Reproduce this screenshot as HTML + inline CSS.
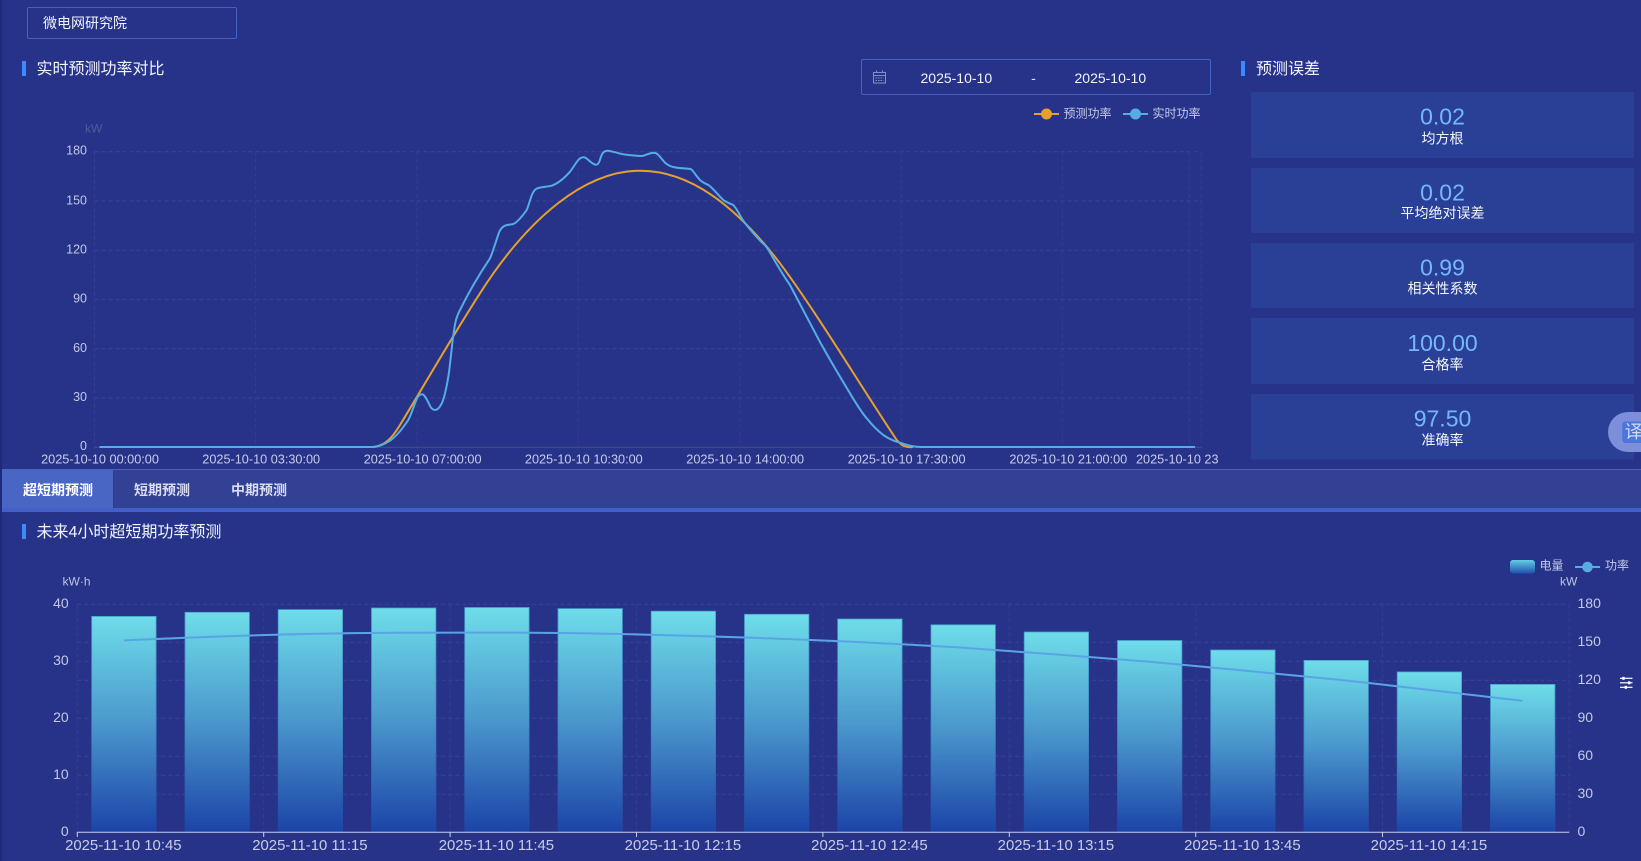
<!DOCTYPE html>
<html lang="zh-CN">
<head>
<meta charset="utf-8">
<title>实时预测功率对比</title>
<style>
html,body{margin:0;padding:0;width:1641px;height:861px;overflow:hidden;background:#273389;}
svg{display:block;position:absolute;left:0;top:0;}
text{font-family:"Liberation Sans","Noto Sans CJK SC",sans-serif;dominant-baseline:central;}
.t{font-size:16px;fill:#f2f4ff;}
.yl{font-size:12.5px;fill:#c3c7e6;text-anchor:end;}
.xl{font-size:12.7px;fill:#c9cce8;text-anchor:middle;}
.val{font-size:23px;fill:#74b7ff;text-anchor:middle;}
.lab{font-size:14px;fill:#f4f6ff;text-anchor:middle;}
.leg{font-size:12px;fill:#c6cae8;}
.l2{font-size:14px;fill:#c5c9e8;text-anchor:end;}
.r2{font-size:14px;fill:#c5c9e8;}
.x2{font-size:14.9px;fill:#c9cce8;text-anchor:middle;}
.tab{font-size:14px;font-weight:bold;fill:#d9dcf2;text-anchor:middle;}
.h{stroke:#3a4495;stroke-width:1;stroke-dasharray:4 3;fill:none;}
.v{stroke:#333e8f;stroke-width:1;stroke-dasharray:4 3;fill:none;}
</style>
</head>
<body>
<svg width="1641" height="861" viewBox="0 0 1641 861" xmlns="http://www.w3.org/2000/svg">
<defs>
<linearGradient id="g" x1="0" y1="0" x2="0" y2="1">
<stop offset="0" stop-color="#6edde9"/>
<stop offset="0.5" stop-color="#4a97cc"/>
<stop offset="1" stop-color="#1b44a8"/>
</linearGradient>
<linearGradient id="gs" x1="0" y1="0" x2="0" y2="1">
<stop offset="0" stop-color="#4a9fce"/>
<stop offset="0.5" stop-color="#3f86c4"/>
<stop offset="1" stop-color="#21459f"/>
</linearGradient>
<linearGradient id="gl" x1="0" y1="0" x2="0" y2="1">
<stop offset="0" stop-color="#62cfe4"/>
<stop offset="1" stop-color="#1f4fae"/>
</linearGradient>
</defs>

<rect x="0" y="0" width="1641" height="861" fill="#273389"/>
<rect x="0" y="0" width="2" height="861" fill="#1f2a78"/>

<!-- top box -->
<rect x="27.5" y="7.5" width="209" height="31" rx="1.5" fill="none" stroke="#4462c4"/>
<text x="43" y="23" style="font-size:14px;fill:#f2f4ff;">微电网研究院</text>

<!-- title 1 -->
<rect x="22" y="61" width="4" height="15" fill="#3b8bff"/>
<text class="t" x="36.5" y="69.5">实时预测功率对比</text>

<!-- date box -->
<rect x="861.5" y="59.5" width="349" height="35" rx="1.5" fill="none" stroke="#4462c4"/>
<g fill="none" stroke="#8090c6" stroke-width="1">
<rect x="873.5" y="72.5" width="12" height="10.5"/>
<path d="M873.5 75.5H885.5M876.5 70.5V73M882.5 70.5V73"/>
<path d="M875.5 78H883.5M875.5 80.5H883.5" stroke-dasharray="1.5 1"/>
</g>
<text x="920.5" y="78" style="font-size:14px;fill:#f2f4ff;">2025-10-10</text>
<text x="1033.5" y="78" style="font-size:14px;fill:#e0e3f5;text-anchor:middle;">-</text>
<text x="1074.5" y="78" style="font-size:14px;fill:#f2f4ff;">2025-10-10</text>

<!-- legend 1 -->
<line x1="1034" y1="114" x2="1059" y2="114" stroke="#e6a12c" stroke-width="2"/>
<circle cx="1046.5" cy="114" r="5.5" fill="#e6a12c"/>
<text class="leg" x="1063.5" y="113.5">预测功率</text>
<line x1="1123" y1="114" x2="1148" y2="114" stroke="#56ade3" stroke-width="2"/>
<circle cx="1135.5" cy="114" r="5.5" fill="#56ade3"/>
<text class="leg" x="1152.5" y="113.5">实时功率</text>

<!-- chart 1 grid -->
<path class="h" d="M94.5 151.7H1201.5M94.5 201H1201.5M94.5 250.2H1201.5M94.5 299.5H1201.5M94.5 348.8H1201.5M94.5 398H1201.5"/>
<path class="v" d="M94.5 151.7V452M255.7 151.7V452M416.9 151.7V452M578.2 151.7V452M740 151.7V452M901.3 151.7V452M1062.4 151.7V452M1189.4 151.7V452M1201.4 151.7V452"/>
<line x1="94.5" y1="447.3" x2="1201.5" y2="447.3" stroke="#474f85"/>

<text x="85" y="128.5" style="font-size:12px;fill:#515c99;">kW</text>
<text class="yl" x="87" y="150.7">180</text>
<text class="yl" x="87" y="200.5">150</text>
<text class="yl" x="87" y="249.7">120</text>
<text class="yl" x="87" y="298.5">90</text>
<text class="yl" x="87" y="347.8">60</text>
<text class="yl" x="87" y="397">30</text>
<text class="yl" x="87" y="445.8">0</text>

<text class="xl" x="100" y="459.5">2025-10-10 00:00:00</text>
<text class="xl" x="261.2" y="459.5">2025-10-10 03:30:00</text>
<text class="xl" x="422.6" y="459.5">2025-10-10 07:00:00</text>
<text class="xl" x="583.8" y="459.5">2025-10-10 10:30:00</text>
<text class="xl" x="745.2" y="459.5">2025-10-10 14:00:00</text>
<text class="xl" x="906.6" y="459.5">2025-10-10 17:30:00</text>
<text class="xl" x="1068.3" y="459.5">2025-10-10 21:00:00</text>
<text class="xl" x="1136" y="459.5" style="text-anchor:start;">2025-10-10 23</text>

<!-- chart 1 curves -->
<path fill="none" stroke="#e6a12c" stroke-width="2" stroke-linecap="round" d="M374 447C384 445.5 391 440 400 425C425 384 450 340 480 293.3C528 218 585 170.7 640 170.7C690 170.7 735 205 780 263.3C815 310 860 385 896.7 440C902 446 905 447.3 912 447.3"/>
<path fill="none" stroke="#56ade3" stroke-width="2" stroke-linejoin="round" d="M99.5 447H372C378 447 384 444.5 390 440.7C396 436.5 403 428 408.3 420C412 413 416 399 418.3 396C420 394.5 421 394.2 422.3 394.3C425 394.6 428 402 430.7 407.3C432.5 409.5 434 410 435 410C437.5 410 440 407 442 403C445 396 448 380 449.3 370C451 355 452 346 452.7 340C454 330 455 324 456 320C457 316 458.5 313 460 310C468 293.5 480 273.3 490 258.3C492.5 253 497 238 499.3 231.7C501 228.5 503 226.5 505 225.7C508 224.5 511 224.6 513.3 224C517 222.5 523 215.5 526.7 210C528.5 206 529.5 201.5 530.7 198.3C532 194 534 190.5 536 189C539 186.8 547 187 551.7 185.7C558 183.5 564 178.5 570 171.7C574 166.5 576 162.5 578.3 160C580 158 582 157.2 584 157.3C587 157.5 592 164.6 596 164.7C597.5 164.7 598.8 163 599.3 161.7C600.5 158.5 601.3 155 602.7 153.3C604 151.4 605.5 150.7 607.3 150.7C611 150.7 617 153.2 623.3 154.3C629 155.2 636 155.7 641.7 156C645 156 649 152.7 654 152.7C658 152.8 661 158.5 665 162.7C668 165.5 672 167 673.3 167C678 168.4 686 168.2 690.7 169C693 170 696 176 700 180C703 182.8 706 183.8 708.3 185C712 187 718 195 723.3 200C727 203 730.5 203.5 733.3 205C737 209 740 215.5 741.7 218.3C746 225 753 233 760 240.5C764 244.5 765.5 245.5 766.7 247.3C769 250.5 772 256 773.3 258.3C780 270 785 278 790 285C797 298 810 323.3 820 342C830 360 841 378.5 850 393.3C856 403.5 861 411.5 866.7 418.3C872 425 878 431 883.3 435C889 439 895 441.5 900 442.7C906 444.8 911 446.2 916.7 446.7C920 447 923 447 926.7 447H1195"/>

<!-- right panel -->
<rect x="1241" y="61" width="4" height="15" fill="#3b8bff"/>
<text class="t" x="1256" y="69.5">预测误差</text>

<rect x="1251" y="92" width="383" height="66" fill="#2a4097"/>
<rect x="1251" y="168" width="383" height="65" fill="#2a4097"/>
<rect x="1251" y="243" width="383" height="65" fill="#2a4097"/>
<rect x="1251" y="318" width="383" height="66" fill="#2a4097"/>
<rect x="1251" y="394" width="383" height="65.5" fill="#2a4097"/>

<text class="val" x="1442.5" y="116.5">0.02</text>
<text class="lab" x="1442.5" y="138.5">均方根</text>
<text class="val" x="1442.5" y="192.7">0.02</text>
<text class="lab" x="1442.5" y="213">平均绝对误差</text>
<text class="val" x="1442.5" y="267.7">0.99</text>
<text class="lab" x="1442.5" y="288.5">相关性系数</text>
<text class="val" x="1442.5" y="343">100.00</text>
<text class="lab" x="1442.5" y="364.5">合格率</text>
<text class="val" x="1442.5" y="418.7">97.50</text>
<text class="lab" x="1442.5" y="440">准确率</text>

<!-- tabs -->
<rect x="2" y="469" width="1639" height="39" fill="#334195"/>
<rect x="2" y="469" width="1639" height="1" fill="#4b63bf"/>
<rect x="2" y="470" width="111" height="38" fill="#4a66c4"/>
<rect x="113" y="470" width="1" height="38" fill="#2e3b8e"/>
<rect x="2" y="508" width="1639" height="4" fill="#4260c8"/>
<text class="tab" x="58" y="490" style="fill:#fff;">超短期预测</text>
<text class="tab" x="162" y="490">短期预测</text>
<text class="tab" x="259" y="490">中期预测</text>

<!-- title 2 -->
<rect x="22" y="524" width="4" height="15" fill="#3b8bff"/>
<text class="t" x="36.5" y="532.5">未来4小时超短期功率预测</text>

<!-- legend 2 -->
<rect x="1510" y="560" width="25" height="13.5" rx="3" fill="url(#gl)"/>
<text class="leg" x="1539.5" y="565.5">电量</text>
<line x1="1575" y1="567" x2="1600" y2="567" stroke="#56ade3" stroke-width="2"/>
<circle cx="1587.5" cy="567" r="5.3" fill="#56ade3"/>
<text class="leg" x="1605" y="565.5">功率</text>

<text x="62.5" y="581.5" style="font-size:12px;fill:#bcc1e0;">kW·h</text>
<text x="1560" y="581.5" style="font-size:12px;fill:#bcc1e0;">kW</text>

<!-- chart 2 grid -->
<path class="h" d="M77.3 604.3H1569.3M77.3 642.3H1569.3M77.3 680.3H1569.3M77.3 718.3H1569.3M77.3 756.3H1569.3M77.3 794.3H1569.3M77.3 661.3H1569.3M77.3 775.3H1569.3"/>
<path class="v" d="M77.3 604.3V832M263.7 604.3V832M450.1 604.3V832M636.5 604.3V832M822.9 604.3V832M1009.3 604.3V832M1195.7 604.3V832M1382.5 604.3V832M1569.3 604.3V832"/>

<!-- bars -->
<g fill="url(#g)" stroke="url(#gs)" stroke-width="0.8">
<rect x="91.7" y="616.4" width="64.4" height="215.6"/>
<rect x="185" y="612.3" width="64.4" height="219.7"/>
<rect x="278.2" y="609.6" width="64.4" height="222.4"/>
<rect x="371.5" y="608" width="64.4" height="224"/>
<rect x="464.7" y="607.5" width="64.4" height="224.5"/>
<rect x="558" y="608.6" width="64.4" height="223.4"/>
<rect x="651.2" y="611.2" width="64.4" height="220.8"/>
<rect x="744.5" y="614.3" width="64.4" height="217.7"/>
<rect x="837.7" y="619" width="64.4" height="213"/>
<rect x="931" y="624.8" width="64.4" height="207.2"/>
<rect x="1024.2" y="632" width="64.4" height="200"/>
<rect x="1117.5" y="640.5" width="64.4" height="191.5"/>
<rect x="1210.7" y="650" width="64.4" height="182"/>
<rect x="1304" y="660.4" width="64.4" height="171.6"/>
<rect x="1397.2" y="671.9" width="64.4" height="160.1"/>
<rect x="1490.5" y="684.4" width="64.4" height="147.6"/>
</g>

<!-- axis -->
<line x1="77.3" y1="832.3" x2="1569.3" y2="832.3" stroke="#c9cde9" stroke-width="1"/>
<path d="M77.3 832V837M263.7 832V837M450.1 832V837M636.5 832V837M822.9 832V837M1009.3 832V837M1195.7 832V837M1382.5 832V837" stroke="#c9cde9" fill="none"/>

<!-- power line -->
<path fill="none" stroke="#5aa4e6" stroke-width="2" d="M123.9 640.4C170 638.3 280 633 403.7 632.8C450 632.4 540 632.5 590.2 633.4C650 634.5 740 637 823 640.5C870 642.7 920 645 963.2 647.8C1010 651 1100 657.5 1149.7 661.8C1200 666.5 1290 674.8 1336.2 679.5C1390 685 1470 695 1522.7 700.8"/>

<!-- chart 2 labels -->
<text class="l2" x="68.7" y="603">40</text>
<text class="l2" x="68.7" y="660">30</text>
<text class="l2" x="68.7" y="717">20</text>
<text class="l2" x="68.7" y="774">10</text>
<text class="l2" x="68.7" y="831">0</text>

<text class="r2" x="1577.5" y="603">180</text>
<text class="r2" x="1577.5" y="641">150</text>
<text class="r2" x="1577.5" y="679">120</text>
<text class="r2" x="1577.5" y="717">90</text>
<text class="r2" x="1577.5" y="755">60</text>
<text class="r2" x="1577.5" y="793">30</text>
<text class="r2" x="1577.5" y="831">0</text>

<text class="x2" x="123.3" y="846">2025-11-10 10:45</text>
<text class="x2" x="309.9" y="846">2025-11-10 11:15</text>
<text class="x2" x="496.4" y="846">2025-11-10 11:45</text>
<text class="x2" x="682.9" y="846">2025-11-10 12:15</text>
<text class="x2" x="869.4" y="846">2025-11-10 12:45</text>
<text class="x2" x="1055.9" y="846">2025-11-10 13:15</text>
<text class="x2" x="1242.4" y="846">2025-11-10 13:45</text>
<text class="x2" x="1428.9" y="846">2025-11-10 14:15</text>

<!-- filter icon -->
<g stroke="#ffffff" stroke-width="1.2">
<line x1="1620" y1="678.3" x2="1632.5" y2="678.3"/>
<line x1="1620" y1="682.8" x2="1632.5" y2="682.8"/>
<line x1="1620" y1="687.3" x2="1632.5" y2="687.3"/>
</g>
<g fill="#ffffff">
<rect x="1622.3" y="676.8" width="2.4" height="3"/>
<rect x="1628" y="681.3" width="2.4" height="3"/>
<rect x="1624.6" y="685.8" width="2.4" height="3"/>
</g>

<!-- translate badge -->
<rect x="1608" y="412" width="70" height="40" rx="20" fill="#7d8edb"/>
<rect x="1622.3" y="421.5" width="40" height="21.5" rx="3" fill="#4c76dc"/>
<text x="1624.8" y="432" style="font-size:18px;fill:#cfdaf8;">译</text>
</svg>
</body>
</html>
